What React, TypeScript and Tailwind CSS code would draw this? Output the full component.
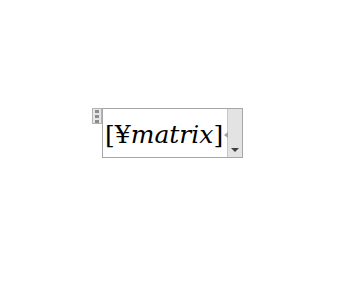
import React from 'react';

const App: React.FC = () => {
    return (
        <div className="w-[337px] h-[301px] bg-white pt-[108px] pl-[92px]">
            <div className="flex items-start">
                <div className="w-[10px] h-[16px] bg-[#e6e6e6] border border-[#b4b4b4] flex flex-col items-center justify-center gap-[2px]">
                    <div className="w-[4px] h-[3px] bg-[#8c8c8c]" />
                    <div className="w-[4px] h-[3px] bg-[#8c8c8c]" />
                    <div className="w-[4px] h-[3px] bg-[#8c8c8c]" />
                </div>
                <div className="relative flex w-[141px] h-[50px] border border-[#a6a6a6] bg-white">
                    <div
                        className="flex-1 flex items-center pl-[2px] pt-[2px] text-[25px] leading-none text-black"
                        style={{ fontFamily: '"DejaVu Serif", serif' }}
                    >
                        <span>[¥</span>
                        <span className="italic">matrix</span>
                        <span>]</span>
                    </div>
                    <div className="absolute left-[121px] top-[23px] w-0 h-0 border-y-[3px] border-y-transparent border-r-[4px] border-r-[#a0a0a0]" />
                    <div className="w-[15px] h-full bg-[#e3e3e3] border-l border-[#c8c8c8] flex items-end justify-center pb-[5px]">
                        <div className="w-0 h-0 border-x-[4px] border-x-transparent border-t-[4px] border-t-[#404040]" />
                    </div>
                </div>
            </div>
        </div>
    );
};

export default App;
